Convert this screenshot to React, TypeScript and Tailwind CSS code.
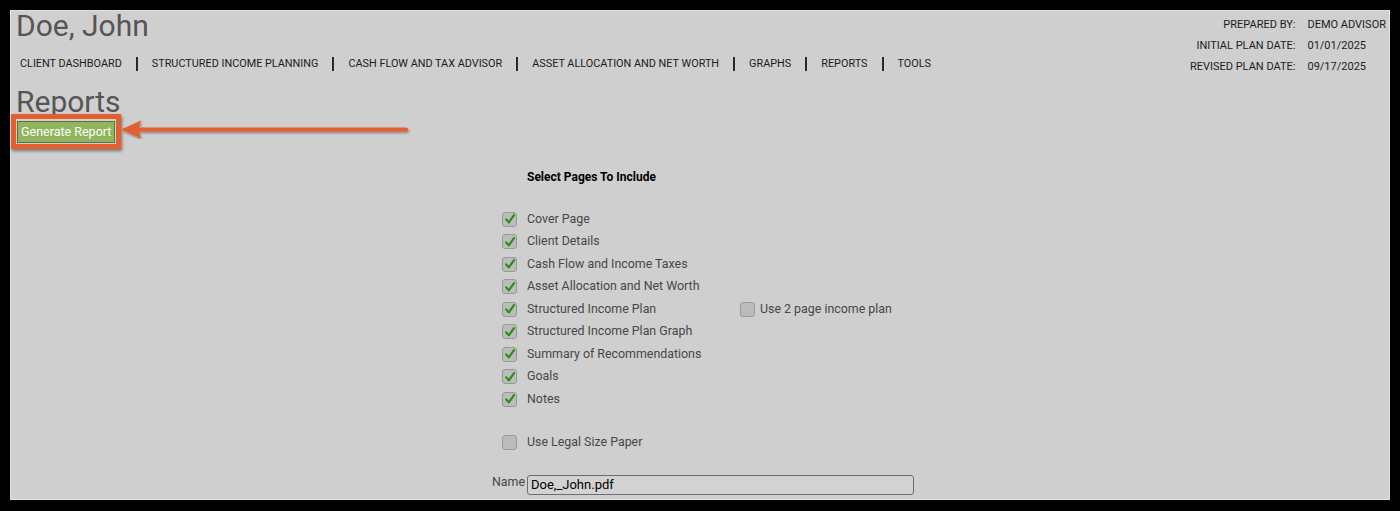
import React from 'react'

const navItems = [
    'CLIENT DASHBOARD',
    'STRUCTURED INCOME PLANNING',
    'CASH FLOW AND TAX ADVISOR',
    'ASSET ALLOCATION AND NET WORTH',
    'GRAPHS',
    'REPORTS',
    'TOOLS',
]

const pages = [
    'Cover Page',
    'Client Details',
    'Cash Flow and Income Taxes',
    'Asset Allocation and Net Worth',
    'Structured Income Plan',
    'Structured Income Plan Graph',
    'Summary of Recommendations',
    'Goals',
    'Notes',
]

const CheckBox = ({ checked }: { checked: boolean }) => (
    <div className="w-[15px] h-[15px] shrink-0 rounded-[3px] border border-[#999999] bg-[#bcbcbc] flex items-center justify-center">
        {checked && (
            <svg width="12" height="12" viewBox="0 0 12 12">
                <path d="M2.2 6.4 L4.8 9.4 L10 2.2" fill="none" stroke="#2c8a1a" strokeWidth="2.2" strokeLinecap="round" strokeLinejoin="round" />
            </svg>
        )}
    </div>
)

const App = () => {
    return (
        <div className="bg-black p-[10px] h-[511px] font-['Roboto',sans-serif]">
            <div className="relative h-[490px] bg-[#cfcfcf] border border-[#e2e2e2]">
                {/* header */}
                <div className="flex justify-between">
                    <div>
                        <h1 className="-mt-[2px] pl-[5px] text-[30px] leading-[34px] text-[#555555]">Doe, John</h1>
                        <nav className="mt-[13px] pl-[9px] flex items-center h-[16px] text-[10.85px] text-[#1c1c1c]">
                            {navItems.map((item, i) => (
                                <React.Fragment key={item}>
                                    {i > 0 && <span className="mx-[14px] w-[2px] h-[14px] bg-[#3b2412]"></span>}
                                    <span>{item}</span>
                                </React.Fragment>
                            ))}
                        </nav>
                    </div>
                    <div className="pt-[3px] pr-[3px] grid grid-cols-[auto_auto] gap-x-[12px] text-[11px] text-[#1c1c1c]">
                        <span className="text-right leading-[21px]">PREPARED BY:</span>
                        <span className="leading-[21px]">DEMO ADVISOR</span>
                        <span className="text-right leading-[21px]">INITIAL PLAN DATE:</span>
                        <span className="leading-[21px]">01/01/2025</span>
                        <span className="text-right leading-[21px]">REVISED PLAN DATE:</span>
                        <span className="leading-[21px]">09/17/2025</span>
                    </div>
                </div>

                <h2 className="mt-[13px] pl-[5px] text-[30px] leading-[24px] text-[#555555]">Reports</h2>

                <div className="inline-block border-[5px] border-[#e35f2f] shadow-[1px_2px_3px_rgba(0,0,0,0.45)]">
                    <button className="m-[1px] h-[22px] px-[3px] bg-[#8fb65c] border border-[#5b6e44] text-white text-[12.5px] leading-[20px]">
                        Generate Report
                    </button>
                </div>

                {/* annotation arrow */}
                <svg className="absolute left-[97px] top-[100px]" width="306" height="28" viewBox="0 0 306 28">
                    <defs>
                        <filter id="sh" x="-5%" y="-50%" width="110%" height="200%">
                            <feDropShadow dx="1" dy="1.5" stdDeviation="1" floodColor="#000" floodOpacity="0.4" />
                        </filter>
                    </defs>
                    <g filter="url(#sh)">
                        <line x1="28" y1="18.5" x2="298" y2="18.5" stroke="#e35f2f" strokeWidth="4" strokeLinecap="round" />
                        <polygon points="13,18.5 33,9.5 30,18.5 33,27.5" fill="#e35f2f" />
                    </g>
                </svg>

                {/* page selection */}
                <div className="pl-[491px]">
                    <p className="mt-[20px] pl-[25px] text-[12px] leading-[16px] font-bold text-black">Select Pages To Include</p>
                    <div className="mt-[23px]">
                        {pages.map((p) => (
                            <div key={p} className="h-[22.5px] flex items-center">
                                <CheckBox checked />
                                <span className="ml-[10px] w-[213px] text-[12.4px] text-[#474747]">{p}</span>
                                {p === 'Structured Income Plan' && (
                                    <>
                                        <CheckBox checked={false} />
                                        <span className="ml-[5px] text-[12.4px] text-[#474747]">Use 2 page income plan</span>
                                    </>
                                )}
                            </div>
                        ))}
                    </div>
                    <div className="mt-[21px] h-[22px] flex items-center">
                        <CheckBox checked={false} />
                        <span className="ml-[10px] text-[12.4px] text-[#474747]">Use Legal Size Paper</span>
                    </div>
                    <div className="mt-[21px] -ml-[10px] flex items-start">
                        <span className="mt-[-1px] text-[12.4px] leading-[16px] text-[#474747]">Name</span>
                        <input
                            readOnly
                            value="Doe,_John.pdf"
                            className="ml-[2px] w-[387px] h-[20px] px-[3px] rounded-[3px] border border-[#6e6e6e] bg-[#d2d2d2] text-[13px] text-black outline-none"
                        />
                    </div>
                </div>
            </div>
        </div>
    )
}

export default App
